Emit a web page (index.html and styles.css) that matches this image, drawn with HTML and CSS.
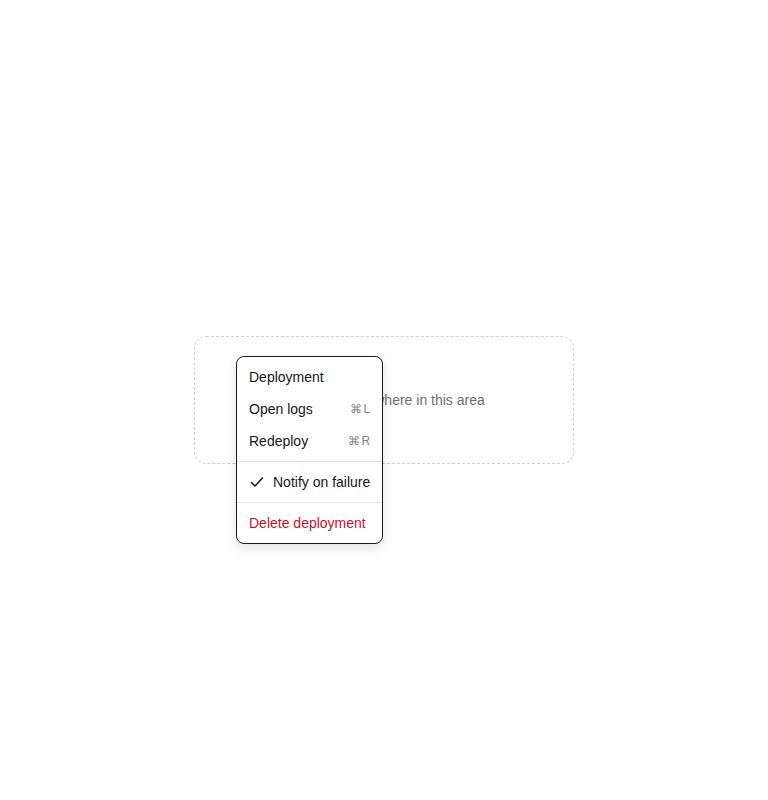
FILE: index.html
```html
<!DOCTYPE html>
<html>
<head>
<meta charset="utf-8">
<link rel="stylesheet" href="styles.css">
</head>
<body>
<div class="page">
  <div class="area">
    <span class="hint">Right-click anywhere in this area</span>
    <div class="menu" role="menu">
      <div class="item"><span class="label">Deployment</span></div>
      <div class="item"><span class="label">Open logs</span><span class="kbd">⌘L</span></div>
      <div class="item"><span class="label">Redeploy</span><span class="kbd">⌘R</span></div>
      <div class="sep"></div>
      <div class="item"><svg class="check" width="16" height="16" viewBox="0 0 16 16" fill="none" stroke="currentColor" stroke-width="1.5" stroke-linecap="round" stroke-linejoin="round"><path d="M2.5 8.5l3.5 3.5 7.5-8"/></svg><span class="label">Notify on failure</span></div>
      <div class="sep"></div>
      <div class="item danger"><span class="label">Delete deployment</span></div>
    </div>
  </div>
</div>
</body>
</html>
```
FILE: styles.css
```css
html, body { margin: 0; padding: 0; background: #fff; }
body { font-family: "Liberation Sans", Arial, sans-serif; }
.page {
  width: 768px; height: 800px;
  display: flex; align-items: center; justify-content: center;
}
.area {
  position: relative;
  width: 378px; height: 126px;
  border: 1px dashed #cfcfcf;
  border-radius: 12px;
  display: flex; align-items: center; justify-content: center;
}
.hint { font-size: 14px; color: #6e6e6e; }
.menu {
  position: absolute; left: 41px; top: 19px;
  background: #fff;
  border: 1px solid #1a1a1a;
  border-radius: 8px;
  padding: 4px;
  box-shadow: 0 4px 12px rgba(0,0,0,0.12);
  display: flex; flex-direction: column;
  min-width: 137px;
}
.item {
  height: 32px; padding: 0 8px;
  display: flex; align-items: center; gap: 8px;
  font-size: 14px; color: #161616;
  white-space: nowrap;
}
.item .label { flex: 1; }
.kbd { font-size: 12px; color: #858585; letter-spacing: 1.5px; margin-right: -1.5px; }
.check { flex: none; color: #161616; }
.sep { height: 1px; background: #e4e4e4; margin: 4px -4px; }
.danger { color: #c8102e; }
```
